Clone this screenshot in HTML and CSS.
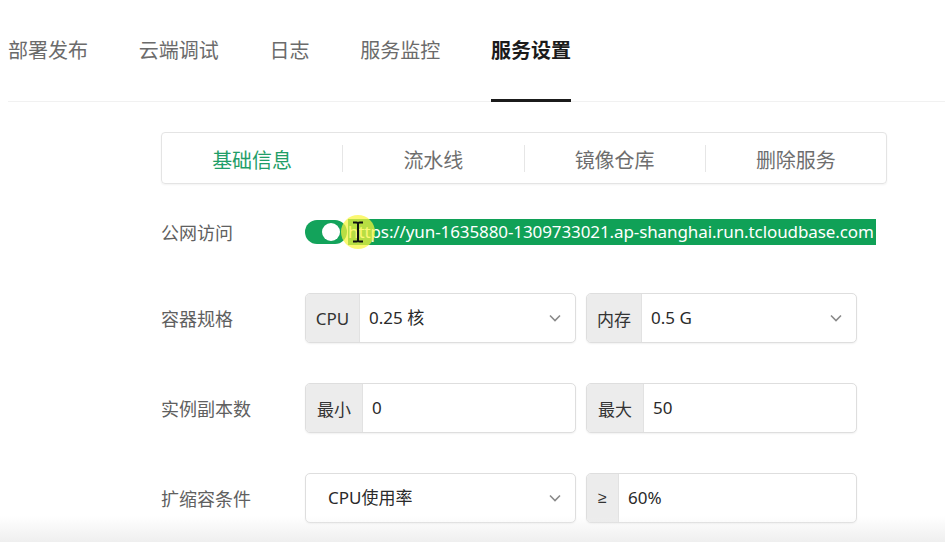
FILE: index.html
```html
<!DOCTYPE html>
<html lang="zh-CN">
<head>
<meta charset="utf-8">
<title>服务设置</title>
<link rel="stylesheet" href="styles.css">
</head>
<body>
<nav class="topnav">
  <span class="topnav-item">部署发布</span>
  <span class="topnav-item">云端调试</span>
  <span class="topnav-item">日志</span>
  <span class="topnav-item">服务监控</span>
  <span class="topnav-item active">服务设置</span>
</nav>
<main class="content">
  <div class="subtabs">
    <div class="subtab active">基础信息</div>
    <div class="subtab">流水线</div>
    <div class="subtab">镜像仓库</div>
    <div class="subtab">删除服务</div>
  </div>
  <div class="form">
    <div class="row row-first">
      <div class="label">公网访问</div>
      <div class="access">
        <span class="toggle"><span class="knob"></span></span>
        <span class="url">https://yun-1635880-1309733021.ap-shanghai.run.tcloudbase.com</span>
        <span class="cursor-halo"></span>
        <svg class="ibeam" width="12" height="22" viewBox="0 0 12 22"><path d="M1 1.5h3.5q1.5 0 1.5 1.5v16q0 1.5-1.5 1.5H1M11 1.5H7.5Q6 1.5 6 3v16q0 1.5 1.5 1.5H11" fill="none" stroke="#111" stroke-width="2"/></svg>
      </div>
    </div>
    <div class="row">
      <div class="label">容器规格</div>
      <div class="controls">
        <div class="box">
          <span class="addon addon-cpu">CPU</span>
          <span class="value">0.25 核</span>
          <svg class="chev" width="12" height="8" viewBox="0 0 12 8"><path d="M1 1.5l5 5 5-5" fill="none" stroke="#8a8a8a" stroke-width="1.6"/></svg>
        </div>
        <div class="box">
          <span class="addon addon-mem">内存</span>
          <span class="value">0.5 G</span>
          <svg class="chev" width="12" height="8" viewBox="0 0 12 8"><path d="M1 1.5l5 5 5-5" fill="none" stroke="#8a8a8a" stroke-width="1.6"/></svg>
        </div>
      </div>
    </div>
    <div class="row">
      <div class="label">实例副本数</div>
      <div class="controls">
        <div class="box">
          <span class="addon addon-2">最小</span>
          <span class="value">0</span>
        </div>
        <div class="box">
          <span class="addon addon-2">最大</span>
          <span class="value">50</span>
        </div>
      </div>
    </div>
    <div class="row">
      <div class="label">扩缩容条件</div>
      <div class="controls">
        <div class="box">
          <span class="value value-select">CPU使用率</span>
          <svg class="chev" width="12" height="8" viewBox="0 0 12 8"><path d="M1 1.5l5 5 5-5" fill="none" stroke="#8a8a8a" stroke-width="1.6"/></svg>
        </div>
        <div class="box">
          <span class="addon addon-ge">≥</span>
          <span class="value">60%</span>
        </div>
      </div>
    </div>
  </div>
</main>
<div class="bottom-fade"></div>
</body>
</html>
```
FILE: styles.css
```css
html, body {
  margin: 0;
  padding: 0;
  background: #ffffff;
}
body {
  width: 945px;
  height: 542px;
  overflow: hidden;
  position: relative;
  font-family: "Noto Sans", "Noto Sans CJK SC", sans-serif;
  color: #333;
}
.topnav {
  display: flex;
  gap: 50.75px;
  margin-left: 8px;
  padding-top: 36px;
  border-bottom: 1px solid #f1f1f1;
  height: 65px;
}
.topnav-item {
  font-family: "Noto Sans CJK SC", sans-serif;
  font-size: 20px;
  line-height: 28px;
  color: #6b6b6b;
  height: 66px;
  box-sizing: border-box;
  border-bottom: 3px solid transparent;
}
.topnav-item.active {
  color: #1b1b1b;
  font-weight: 700;
  border-bottom-color: #1b1b1b;
}
.content {
  padding-left: 161px;
  padding-top: 30px;
}
.subtabs {
  width: 726px;
  height: 52px;
  box-sizing: border-box;
  border: 1px solid #e4e4e4;
  border-radius: 4px;
  box-shadow: 0 1px 2px rgba(0,0,0,0.05);
  display: flex;
  align-items: center;
}
.subtab {
  flex: 1;
  text-align: center;
  font-family: "Noto Sans CJK SC", sans-serif;
  font-size: 20px;
  line-height: 24px;
  padding-top: 3px;
  color: #6e6e6e;
  border-left: 1px solid #e6e6e6;
}
.subtab:first-child {
  border-left: none;
}
.subtab.active {
  color: #1f9e68;
}
.form {
  display: flex;
  flex-direction: column;
  gap: 40px;
  margin-top: 27px;
}
.row {
  display: flex;
  align-items: center;
  height: 50px;
}
.row-first {
  height: 42px;
}
.label {
  width: 144px;
  font-family: "Noto Sans CJK SC", sans-serif;
  font-size: 18px;
  color: #606060;
  line-height: 26px;
}
.access {
  position: relative;
  display: flex;
  align-items: center;
  height: 42px;
}
.toggle {
  width: 42px;
  height: 24px;
  border-radius: 12px;
  background: #13a35b;
  box-sizing: border-box;
  position: relative;
  flex: none;
}
.knob {
  position: absolute;
  right: 7px;
  top: 3px;
  width: 18px;
  height: 18px;
  border-radius: 50%;
  background: #ffffff;
}
.url {
  margin-left: 1px;
  background: #10a157;
  color: #ffffff;
  font-family: "Noto Sans", sans-serif;
  font-size: 17px;
  line-height: 26px;
  padding: 0 2px 0 0;
  white-space: nowrap;
  letter-spacing: -0.1px;
}
.cursor-halo {
  position: absolute;
  left: 36px;
  top: 4px;
  width: 34px;
  height: 34px;
  border-radius: 50%;
  background: rgba(250, 245, 60, 0.72);
}
.ibeam {
  position: absolute;
  left: 47px;
  top: 10px;
}
.controls {
  display: flex;
  gap: 10px;
}
.box {
  width: 271px;
  height: 50px;
  box-sizing: border-box;
  border: 1px solid #dedede;
  border-radius: 5px;
  box-shadow: 0 1px 2px rgba(0,0,0,0.06);
  display: flex;
  align-items: center;
  overflow: hidden;
  background: #fff;
}
.addon {
  align-self: stretch;
  display: flex;
  align-items: center;
  justify-content: center;
  background: #ececec;
  border-right: 1px solid #e2e2e2;
  font-family: "Noto Sans", "Noto Sans CJK SC", sans-serif;
  font-size: 17px;
  color: #333;
  flex: none;
}
.addon-cpu { width: 53px; }
.addon-mem { width: 54px; }
.addon-2 { width: 56px; }
.addon-ge {
  width: 31px;
  font-family: "Liberation Sans", "DejaVu Sans", sans-serif;
  font-size: 16px;
}
.value {
  flex: 1;
  padding-left: 9px;
  font-family: "Noto Sans", "Noto Sans CJK SC", sans-serif;
  font-size: 17px;
  color: #2a2a2a;
  line-height: 24px;
}
.value-select {
  padding-left: 22px;
}
.chev {
  margin-right: 14px;
  flex: none;
}
.bottom-fade {
  position: absolute;
  left: 0;
  right: 0;
  bottom: 0;
  height: 26px;
  background: linear-gradient(to bottom, rgba(240,240,240,0), rgba(238,238,238,0.95));
  pointer-events: none;
}
```
